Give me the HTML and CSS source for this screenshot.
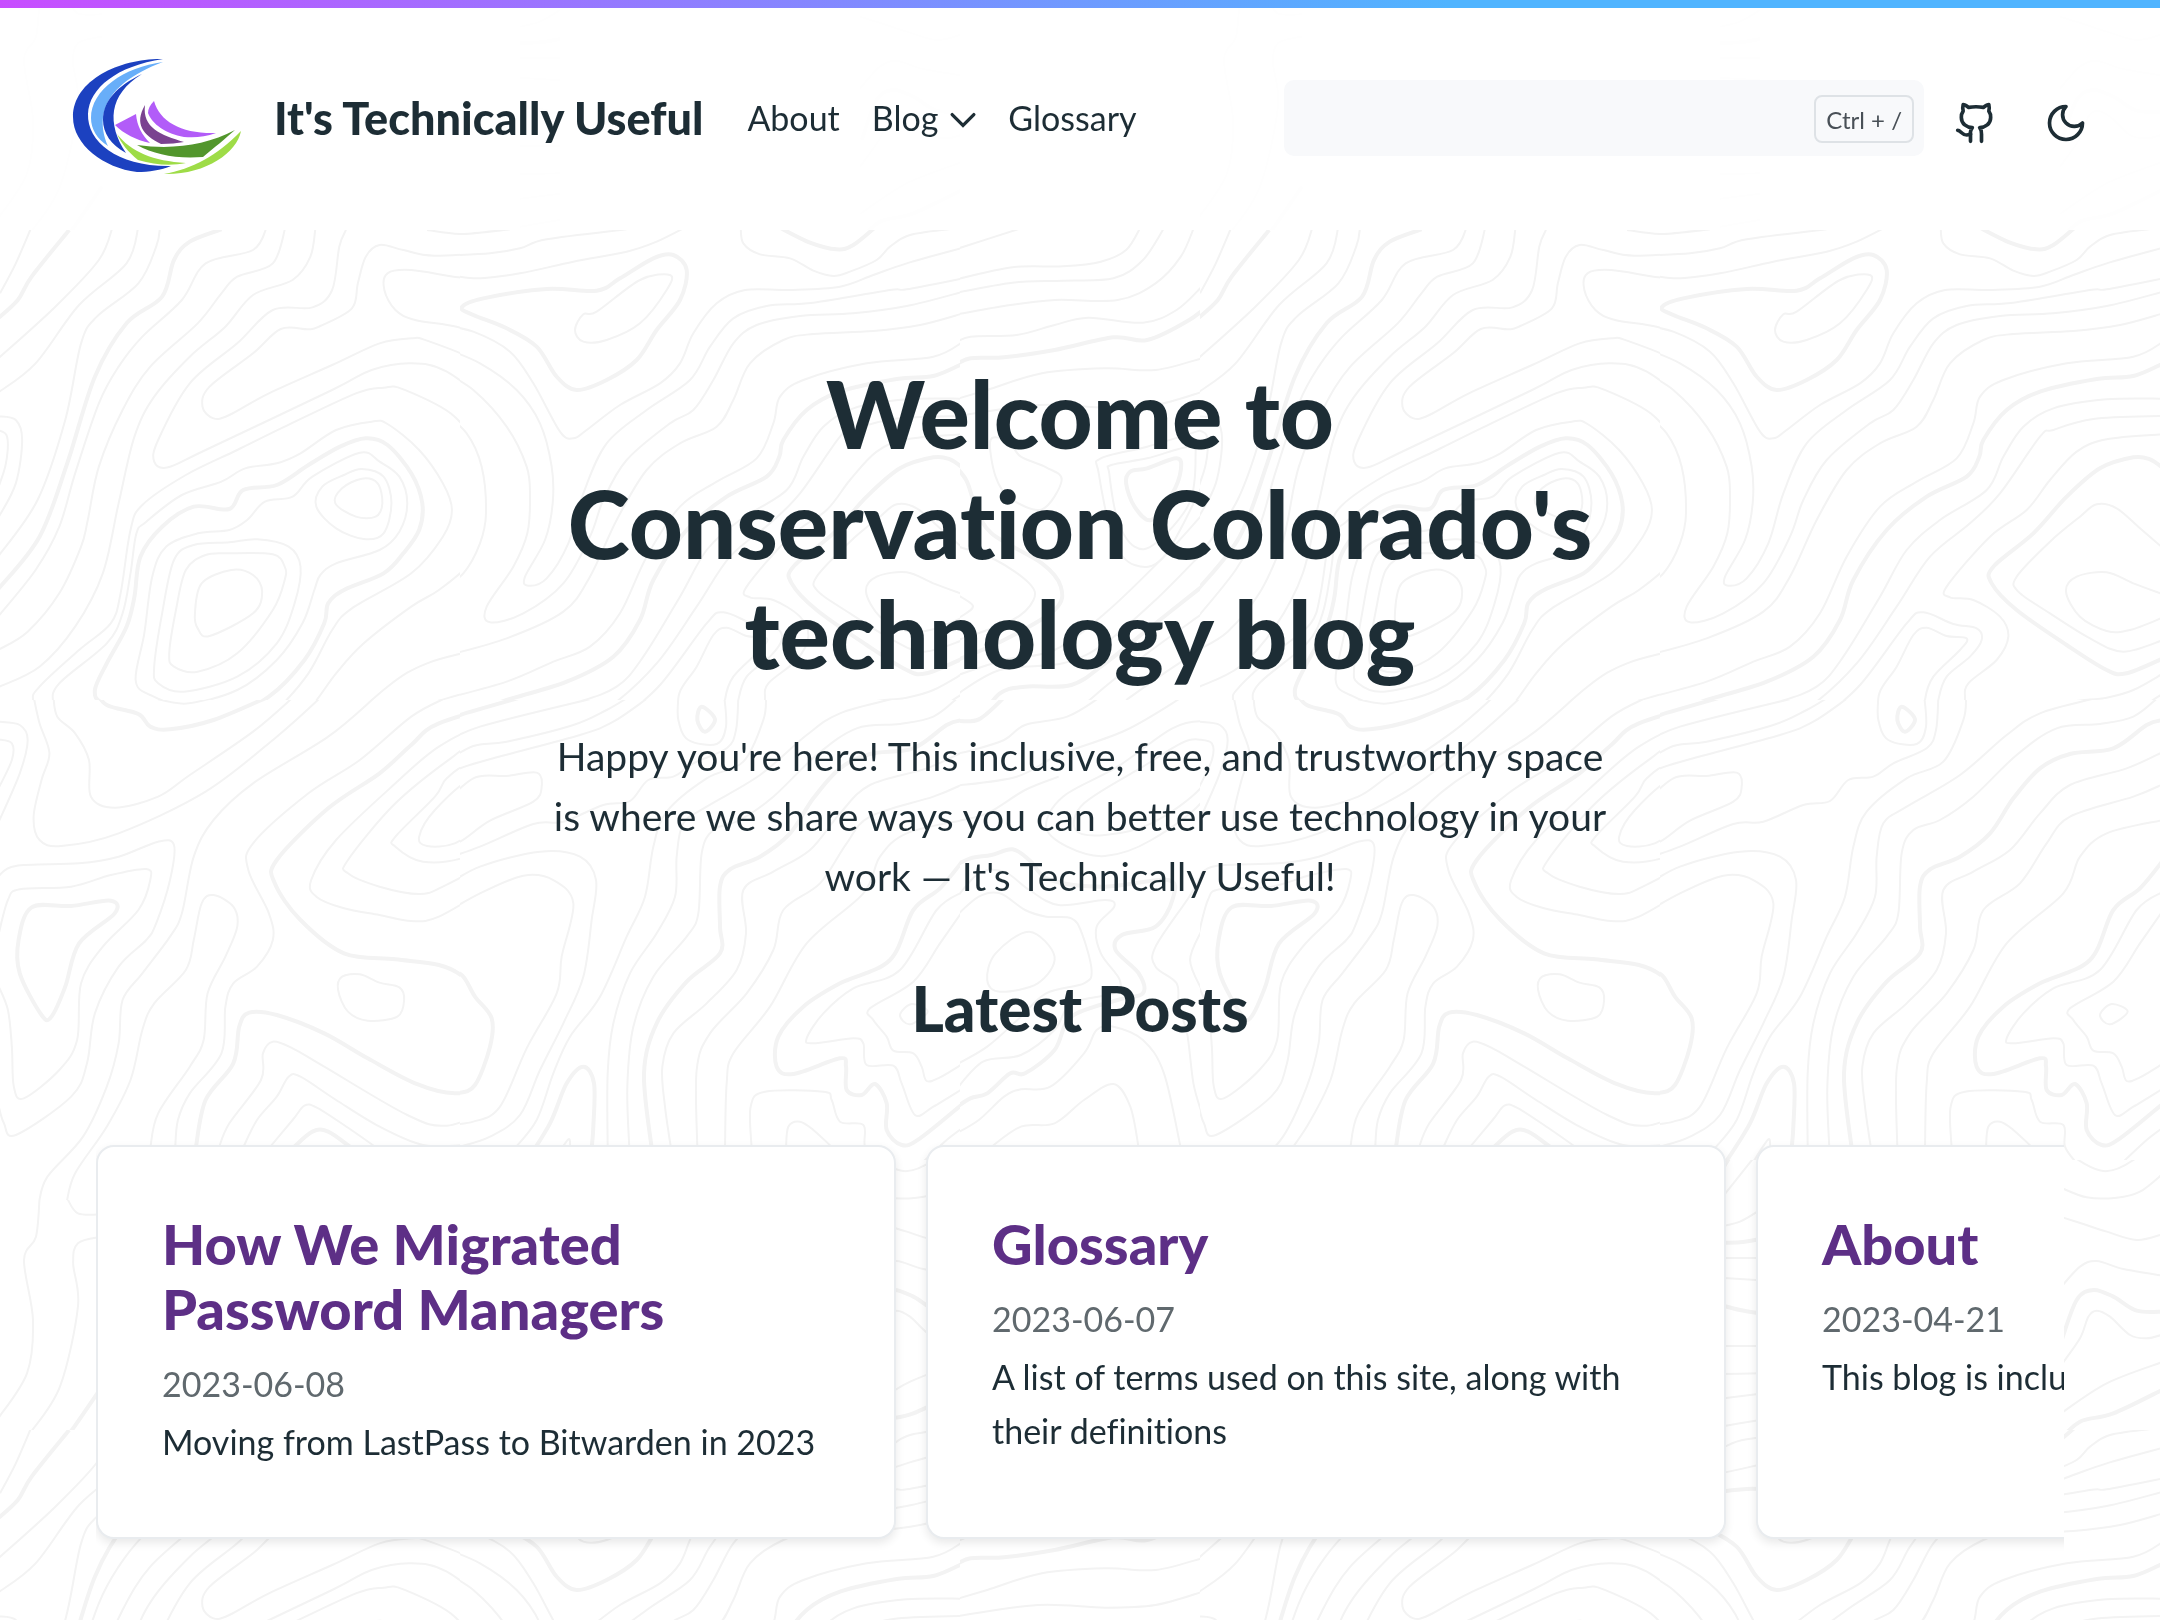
FILE: index.html
```html
<!DOCTYPE html>
<html lang="en">
<head>
<meta charset="utf-8">
<meta name="viewport" content="width=device-width, initial-scale=1">
<title>It's Technically Useful</title>
<link rel="stylesheet" href="styles.css">
</head>
<body>
<svg class="topography" aria-hidden="true">
  <defs>
    <pattern id="contours" width="1200" height="1200" patternUnits="userSpaceOnUse"></pattern>
  </defs>
  <rect width="100%" height="100%" fill="url(#contours)"/>
</svg>

<header class="site-header">
  <div class="header-inner">
    <a class="brand" href="#">
      <svg class="brand-logo" viewBox="0 0 172 120" aria-hidden="true">
        <path fill="#1c41c0" d="M91 1C50 0 1 21 1 59c0 28 31 51 64 55 12 0 24-2 34-6C46 109 15 84 16 56 17 30 45 8 91 1z"/>
        <path fill="#68aef9" d="M91 4C52 9 19 32 19 60c0 11 6 21 17 28C25 62 27 28 91 4z"/>
        <path fill="#1c41c0" d="M70 16C45 28 31 43 31 62c0 13 8 25 23 33C35 66 36 37 70 16z"/>
        <path fill="#b25cf8" d="M64 56 43 67c9 9 21 15 35 18-8-8-13-17-14-29z"/>
        <path fill="#7a4290" d="M73 47c-11 19-2 30 16 39 9 0 16-1 23-2C89 77 70 70 73 47z"/>
        <path fill="#b25cf8" d="M82 43c-4 4-6 8-6 12 4 11 18 21 36 24 11 1 21 0 32-4-34 1-56-11-62-32z"/>
        <path fill="#9edc47" d="M45 76c4 9 11 18 21 26 17 5 33 6 48 3-33-2-55-11-69-29z"/>
        <path fill="#52962c" d="M65 87c37 5 69 0 98-15-9 8-21 18-32 27-26 2-48-2-66-12z"/>
        <path fill="#9edc47" d="M169 73c-4 22-36 44-77 43 28-5 53-18 77-43z"/>
      </svg>
      <span class="brand-name">It's Technically Useful</span>
    </a>
    <nav class="main-nav" aria-label="Main">
      <a href="#">About</a>
      <a class="has-menu" href="#">Blog
        <svg class="chevron" viewBox="0 0 24 16" aria-hidden="true"><path d="M2 3l10 10L22 3"/></svg>
      </a>
      <a href="#">Glossary</a>
    </nav>
    <div class="header-tools">
      <form class="search" role="search">
        <input class="search-input" type="search" aria-label="Search">
        <kbd class="search-hint">Ctrl + /</kbd>
      </form>
      <div class="icon-links">
        <a class="icon-link" href="#" aria-label="GitHub">
          <svg class="icon" viewBox="0 0 24 24" aria-hidden="true"><path d="M15 22v-4a4.8 4.8 0 0 0-1-3.5c3 0 6-2 6-5.5.08-1.25-.27-2.48-1-3.5.28-1.15.28-2.35 0-3.5 0 0-1 0-3 1.5-2.64-.5-5.36-.5-8 0C6 2 5 2 5 2c-.3 1.15-.3 2.35 0 3.5A5.403 5.403 0 0 0 4 9c0 3.5 3 5.5 6 5.5-.39.49-.68 1.05-.85 1.65-.17.6-.22 1.23-.15 1.85v4"/><path d="M9 18c-4.51 2-5-2-7-2"/></svg>
        </a>
        <button class="icon-link" type="button" aria-label="Toggle dark mode">
          <svg class="icon" viewBox="0 0 24 24" aria-hidden="true"><path d="M12 3a6 6 0 0 0 9 9 9 9 0 1 1-9-9Z"/></svg>
        </button>
      </div>
    </div>
  </div>
</header>

<main>
  <section class="hero">
    <h1 class="hero-title">Welcome to Conservation Colorado's technology blog</h1>
    <p class="hero-lead">Happy you're here! This inclusive, free, and trustworthy space is where we share ways you can better use technology in your work — It's Technically Useful!</p>
    <h2 class="section-title">Latest Posts</h2>
  </section>
  <section class="posts" aria-label="Latest posts">
    <article class="card">
      <h3 class="card-title"><a href="#">How We Migrated Password Managers</a></h3>
      <p class="card-date">2023-06-08</p>
      <p class="card-text">Moving from LastPass to Bitwarden in 2023</p>
    </article>
    <article class="card">
      <h3 class="card-title"><a href="#">Glossary</a></h3>
      <p class="card-date">2023-06-07</p>
      <p class="card-text">A list of terms used on this site, along with their definitions</p>
    </article>
    <article class="card">
      <h3 class="card-title"><a href="#">About</a></h3>
      <p class="card-date">2023-04-21</p>
      <p class="card-text">This blog is inclusive</p>
    </article>
  </section>
</main>
<script src="contours.js"></script>
</body>
</html>
```
FILE: styles.css
```css
* {
  box-sizing: border-box;
}

body {
  margin: 0;
  min-height: 100vh;
  overflow-x: hidden;
  background: #fff;
  color: #1d2d35;
  font-family: Lato, "Open Sans", sans-serif;
  font-size: 34px;
  font-variant-ligatures: none;
  line-height: 54px;
}

h1, h2, h3, p {
  margin: 0;
}

h1, h2, h3 {
  font-weight: 900;
}

a {
  color: inherit;
  text-decoration: none;
}

.topography {
  position: fixed;
  inset: 0;
  width: 100%;
  height: 100%;
  z-index: -1;
}

.contour {
  fill: none;
  stroke: #f3f3f3;
  stroke-width: 2;
}

.contour-index {
  stroke-width: 4;
}

.site-header {
  height: 230px;
  border-top: 8px solid;
  border-image: linear-gradient(90deg, #c84dff, #50b4ff 67%) 1;
  background: rgba(255, 255, 255, 0.88);
}

.header-inner {
  display: flex;
  align-items: center;
  height: 220px;
  padding: 0 68px 0 72px;
}

.brand {
  display: flex;
  align-items: center;
  gap: 30px;
}

.brand-logo {
  width: 172px;
  height: 120px;
}

.brand-name {
  font-size: 45px;
  font-weight: 900;
}

.main-nav {
  display: flex;
  gap: 32px;
  margin-left: 44px;
}

.has-menu {
  display: flex;
  align-items: center;
  gap: 12px;
}

.chevron {
  width: 26px;
  height: 18px;
  margin-top: 4px;
  fill: none;
  stroke: currentColor;
  stroke-width: 3;
  stroke-linecap: round;
}

.header-tools {
  display: flex;
  align-items: center;
  gap: 26px;
  margin-left: auto;
}

.search {
  position: relative;
  width: 640px;
}

.search-input {
  display: block;
  width: 100%;
  height: 76px;
  padding: 0 120px 0 24px;
  border: 0;
  border-radius: 10px;
  background: #f8f9fb;
  font: inherit;
}

.search-hint {
  position: absolute;
  top: 15px;
  right: 10px;
  height: 48px;
  padding: 0 10px;
  border: 2px solid #dee2e6;
  border-radius: 8px;
  color: #495057;
  font-family: inherit;
  font-size: 24px;
  line-height: 46px;
}

.icon-links {
  display: flex;
  gap: 38px;
  margin-top: 10px;
}

.icon-link {
  display: flex;
  padding: 4px;
  border: 0;
  background: none;
  color: inherit;
}

.icon {
  width: 44px;
  height: 44px;
  fill: none;
  stroke: currentColor;
  stroke-width: 2;
  stroke-linecap: round;
  stroke-linejoin: round;
}

.hero {
  max-width: 1080px;
  margin: 0 auto;
  padding-top: 128px;
  text-align: center;
}

.hero-title {
  font-size: 94px;
  line-height: 110px;
}

.hero-lead {
  margin-top: 38px;
  padding: 0 12px;
  font-size: 39px;
  line-height: 60px;
}

.section-title {
  margin-top: 66px;
  font-size: 62px;
  line-height: 72px;
}

.posts {
  display: flex;
  gap: 30px;
  margin: 91px 96px 0;
  padding: 10px 0 40px;
  overflow: hidden;
}

.card {
  flex: 0 0 800px;
  padding: 64px 64px 68px;
  border: 2px solid #e9ecef;
  border-radius: 18px;
  background: #fff;
  box-shadow: 0 4px 10px rgba(0, 0, 0, 0.09);
}

.card-title {
  margin-bottom: 16px;
  color: #5d2f86;
  font-size: 56px;
  line-height: 65px;
}

.card-date {
  margin-bottom: 4px;
  color: #60696e;
}
```
FILE: contours.js
```js
// Contour lines of the map background. Each sheet covers one part of the
// 1200px tile: at = origin, k = units per pixel, clip = x, y, width, height.
// A line that starts with "!" is a heavy index line; "z" closes a ring.
const sheets = [
  { at: [0, 220], k: [2.529, 3], clip: [0, 230, 460, 470], lines: `
80,20 40,130 0,220
!175,30 80,170 45,240 -5,295
285,20 250,120 140,260 -5,416
350,20 320,130 200,255 90,430 -5,518
405,20 395,80 350,190 245,290 205,370 165,600 95,840 -5,1010
!560,28 480,65 440,120 410,230 320,310 240,470 170,730 100,950 -5,1108
675,20 640,90 520,130 460,240 360,350 300,440 250,550 190,760 150,920 90,1050 -5,1190
722,20 690,130 600,170 560,220 500,310 380,440 310,570 250,740 222,900 205,980 150,1120 70,1235 -5,1290
798,20 785,110 740,180 640,225 570,320 480,410 390,530 340,650 300,850 260,1060 190,1220 100,1340 -5,1402
875,30 858,80 840,210 790,262 690,270 600,370 480,490 400,660 390,725 425,742 520,690 840,510 940,450 1040,430 1130,455 1250,570 1320,700 1340,800
1568,32 1380,60 1290,90 1100,107 1020,90 960,75 925,110 905,190 890,265 810,318 780,328 710,327 640,400 530,500 512,560 540,595 580,585 680,520 840,435 960,370 1040,355 1080,362 1220,430 1320,520
1080,30 1170,42 1270,30
1568,105 1440,130 1230,173 1160,172 1040,150 980,160 972,210 1000,270 1050,300 1160,322 1260,370 1330,450
123,1570 85,1450 100,1400 200,1290 280,1210 305,1120 330,930 360,855 470,765 600,690 720,620 900,520 970,503 1020,508 1150,590 1215,720 1228,860 1222,970 1190,1030 1110,1110 1040,1160 920,1270 850,1360 780,1470 690,1560
205,1560 160,1510 135,1450 150,1390 270,1270 310,1180 330,1060 345,940 370,905 460,825 560,785 620,745 700,730 760,700 850,630 940,605 980,612 1060,690 1120,790 1143,870 1120,950 1040,1060 890,1165 840,1230 780,1360 700,1470 610,1560
!925,655 980,675 1040,760 1068,850 1060,930 1020,1000 970,1060 870,1110 830,1150 820,1210 770,1320 680,1430 560,1500 410,1528 375,1510 350,1480 260,1450 240,1410 270,1330 320,1220 340,1130 355,1010 410,920 490,860 580,867 615,810 700,795 780,735 860,680 z
910,698 960,725 1010,770 1030,850 1010,935 960,990 850,1030 810,1065 795,1110 765,1210 700,1320 600,1410 465,1452 380,1425 343,1380 365,1240 385,1070 420,980 500,940 580,930 625,900 670,845 740,830 790,770 z
915,747 970,770 990,850 970,940 920,957 850,925 800,860 815,800 870,765 z
915,776 955,790 967,850 950,890 900,890 848,850 865,805 z
650,958 730,980 760,1040 745,1150 700,1270 600,1370 465,1415 400,1390 390,1340 410,1180 440,1020 490,975 580,967 z
580,1000 690,1003 720,1040 720,1080 690,1170 600,1300 500,1355 440,1340 428,1300 445,1170 470,1050 520,1005 z
585,1050 640,1065 663,1115 640,1180 530,1248 500,1225 493,1180 510,1090 z
-5,589 40,600 56,660 40,790 -5,895
-5,630 18,650 15,730 -5,805
830,1560 980,1400 1080,1330 1230,1280 1380,1210
970,1560 1080,1460 1130,1435 1300,1380
!1050,1560 1110,1500 1300,1430` },
  { at: [0, 700], k: [2.529, 3], clip: [0, 700, 460, 500], lines: `
85,-10 100,70 125,160 105,240 85,350 100,420 155,438 300,400 520,275 700,110 813,-10
135,-10 145,50 190,100 225,180 230,290 290,323 400,290 480,225 640,95 743,-10
!240,-30 270,15 350,42 380,80 430,88 540,60 680,-10
380,-8 465,11 545,-8
-5,65 50,75 70,120 50,220 -5,370
-5,118 30,130 30,180 -5,268
950,-10 830,110 640,250 540,360 490,470 460,640 430,710 360,820 310,900 300,1030 270,1160 210,1310 120,1430 98,1510
1125,-5 1040,50 910,180 780,280 640,430 628,510 680,640 690,720 650,800 590,850 570,920 560,1060 480,1180 450,1260 443,1345
!1310,0 1110,70 1040,135 960,220 830,325 700,480 695,550 760,660 870,760 1000,778 1110,795 1170,830 1200,890 1240,950 1240,1030 1200,1155 1150,1180 1050,1150 930,1075 820,1000 700,945 630,938 605,980 590,1090 520,1200 495,1345
1483,0 1230,75 1110,140 1000,250 850,420 787,540 800,590 870,625 960,645 1040,663 1110,650 1240,560
1568,1180 1260,1230 1130,1277 1030,1245 820,1100 740,1045 690,1025 665,1060 660,1140 580,1270 553,1345
1568,20 1400,90 1200,138 1140,175 1000,310 880,480 880,520 960,560 1060,582 1120,560 1240,485
614,1345 650,1260 700,1190 730,1130 760,1130 850,1200 960,1280 1070,1335 1180,1335
1568,65 1400,130 1200,185 1130,235 1100,290 1000,410 1000,440 1070,485 1180,470 1340,378
1200,230 1290,225 1360,218 1370,260 1330,320 1230,370 1150,430 1080,438 1060,410 1100,330 z
-5,530 40,498 200,490 300,470 400,425 440,435 430,540 395,670 370,720 300,800 240,940 220,1090 180,1190 40,1305 10,1270 -5,1210
-5,710 20,600 50,568 180,560 280,525 370,507 380,540 350,630 260,740 205,850 195,1020 150,1110 60,1195 35,1160 30,1040 20,930 -5,855
!80,622 180,618 280,602 290,640 200,730 165,860 130,950 105,945 50,820 47,720 z
380,1345 400,1240 480,1100 515,1020 525,880 570,770 600,680 590,620 540,585 510,610 490,720 470,810 390,910 360,990 330,1140 270,1280 190,1420 168,1510
855,870 865,830 910,823 960,848 1010,862 1022,900 1005,950 930,962 880,935 z
680,1345 740,1260 770,1217 800,1222 870,1275 955,1345
!740,1345 790,1295 830,1295 890,1345` },
  { at: [440, 220], k: [3, 3], clip: [460, 230, 500, 470], lines: `
0,38 70,42 210,28
0,108 150,100 240,85 320,58 560,28
0,160 110,175 240,160 400,125 560,95 650,65 740,20
!65,262 130,235 320,207 470,212 540,175 640,115 700,105 740,150 720,240 650,330 590,420 500,480 410,510 350,470 290,380 200,325 100,285 z
430,283 470,275 600,180 690,165 680,210 600,310 500,360 430,365 405,330 z
0,315 100,335 210,395 280,490 360,635 400,655 440,630 540,555 660,490 720,430 760,340 830,250 915,210 1050,210 1200,200 1300,165 1400,130 1570,83
902,20 910,70 960,103 1050,115 1120,152 1180,168 1230,155 1310,120 1350,80 1410,45 1530,27
!1010,18 1110,68 1190,88 1240,75 1310,18
0,380 120,430 230,510 300,610 335,740 338,850 315,960 255,1070 265,1097 320,1075 385,970 430,820 500,670 620,570 750,480 810,380 880,295 980,258 1120,248 1350,210 1400,208 1570,175
0,450 100,510 200,620 260,740 270,830 262,940 220,1040 140,1160 150,1207 250,1180 370,1090 450,950 490,840 560,720 690,610 760,570 820,480 880,370 950,315 1080,288 1240,280 1400,258 1570,215
0,570 80,640 125,740 138,880 120,970 70,1060 0,1112
0,1312 200,1255 370,1175 450,1070 530,900 620,750 720,670 830,620 880,540 930,430 1030,360 1120,342 1300,333 1440,315 1570,280
0,1440 200,1385 340,1325 450,1280 540,1180 620,1010 720,860 830,785 950,715 1000,610 1020,530 1090,480 1280,430 1480,410 1570,365
!20,1500 200,1440 380,1385 520,1310 600,1200 640,1080 740,930 860,830 980,770 1018,710 1030,660 1100,570 1200,515 1370,477 1480,468 1570,430
200,1500 400,1450 530,1400 610,1310 720,1130 800,990 900,900 1040,810 1090,710 1150,620 1240,565 1400,538 1570,536
420,1500 510,1460 650,1330 770,1160 870,1010 990,910 1080,820 1200,650 1240,630 1360,597 1570,588
540,1500 660,1395 800,1210 850,1177 940,1212 1010,1225 1025,1260 990,1310 920,1370 895,1440 890,1510
1570,643 1400,658 1310,695 1230,780 1160,870 1050,950 920,1100 930,1132 1000,1140 1080,1190 1105,1250 1070,1320 985,1390 975,1440 978,1510
!1570,745 1530,718 1480,712 1380,745 1280,830 1180,940 1060,1040 1055,1090 1130,1170 1280,1275 1400,1350 1460,1360 1570,1315
1570,985 1500,925 1430,865 1370,853 1320,890 1230,965 1130,1070 1135,1115 1230,1180 1350,1255 1450,1295 1570,1260
1570,1123 1480,1090 1400,1057 1310,1070 1278,1115 1320,1190 1400,1233 1470,1230 1570,1192
715,1510 718,1420 770,1340 820,1245 860,1223 920,1248 980,1255 960,1290 880,1370 855,1440 860,1510
1165,1500 1270,1450 1400,1433 1480,1410 1570,1360
1420,1500 1490,1470 1570,1420` },
  { at: [440, 700], k: [3, 3], clip: [460, 700, 500, 460], lines: `
!-20,75 60,45 250,-10
0,138 120,80 480,-10
0,195 100,138 200,125 400,75 500,30 560,-5
0,262 50,210 160,175 420,105 520,65 622,-5
715,-10 715,60 745,120 830,132 858,80 853,-10
!785,20 825,58 795,95 772,60 z
895,-10 888,90 860,145 760,190 700,230 625,240 570,303 490,315 370,365 280,372 120,440 0,482
0,325 100,235 200,228 290,218 305,260 280,305 150,362 60,425 0,437
978,-10 970,60 910,185 800,235 680,335 640,440 615,590 560,710 480,890 390,1010 340,1120 290,1260 220,1350
0,568 120,500 300,455 420,470 468,540 455,660 430,830 370,970 300,1110 240,1245 150,1310 60,1340
0,648 120,580 250,527 340,540 400,610 365,770 350,880 260,1045 180,1220 100,1265 0,1277
!0,798 65,825 105,890 155,955 150,1040 105,1155 50,1180 0,1175
!255,1390 330,1270 380,1150 430,1100 462,1150 460,1280 455,1345
340,1385 385,1318 390,1350
1365,-5 1200,40 1100,105 960,225 800,320 730,370 710,470 705,590 650,700 570,820 520,970 503,1120 503,1345
1555,-8 1480,50 1380,72 1250,85 1130,165 1000,290 900,360 820,390 785,460 775,640 740,710 640,830 580,980 562,1160 568,1345
!1570,60 1520,75 1420,145 1290,162 1200,205 1120,295 1050,400 960,470 870,508 840,560 840,680 840,760 740,845 650,970 612,1120 635,1345
1570,155 1460,205 1290,255 1200,340 1110,450 1000,515 910,570 918,700 890,810 800,910 700,1000 667,1100 675,1220 693,1345
1570,252 1480,290 1290,350 1220,430 1140,550 1030,630 1000,750 920,880 810,1000 770,1110 772,1345
1570,360 1400,400 1320,470 1270,580 1100,730 990,920 880,1060 860,1150 855,1345
!1570,480 1500,565 1420,630 1350,780 1200,850 1090,920 1015,1010 1010,1100 1060,1122 1200,1075 1218,1100 1220,1170 1265,1185 1305,1152 1340,1210 1340,1290 1385,1335 1440,1315 1570,1210
1570,575 1490,630 1380,810 1240,865 1150,940 1100,1015 1120,1030 1240,1015 1270,1030 1280,1095 1360,1097 1385,1150 1425,1245 1480,1220 1570,1165
1570,630 1500,730 1420,845 1290,925 1300,960 1340,1010 1360,1052 1420,1060 1445,1100 1460,1143 1500,1132 1570,1090
1415,912 1463,935 1410,973 1380,945 z
935,1345 932,1220 975,1175 1150,1175 1175,1200 1200,1265 1270,1275 1275,1340 1310,1390
1038,1345 1045,1280 1080,1265 1120,1290 1185,1350
1570,1282 1520,1320 1450,1385` },
  { at: [600, 220], k: [2.376, 3], clip: [960, 230, 240, 470], lines: `
840,90 1000,25
840,180 980,142 1100,139 1190,125 1250,90 1285,20
840,220 980,188 1100,182 1220,175 1290,120 1342,20
840,285 960,258 1080,240 1230,240 1320,190 1380,110 1412,20
840,372 880,350 990,345 1080,315 1160,293 1290,308 1370,270 1430,200
!840,438 880,415 960,412 1080,390 1220,352 1300,360 1400,300 1460,240
840,540 920,510 1050,460 1200,445 1320,450 1430,415
840,590 1040,555 1200,563 1320,555 1430,516
928,660 940,770 975,835 1050,868 1097,780 1060,742 1000,710 970,665 z
!1250,790 1260,755 1300,745 1370,715 1380,750 1360,820 1310,900 1270,860 z
1210,760 1215,735 1300,715 1400,680 1415,710 1400,850 1320,970 1270,980 1230,900 z
1430,630 1300,680 1190,715 1185,760 1220,960 1270,1035 1340,1010 1430,800
!835,725 870,780 890,850 930,940 1050,1030 1095,1100 1080,1170 960,1260 840,1325
840,975 940,1020 1020,1090 1030,1140 980,1200 840,1265
840,1118 885,1155 870,1180 835,1205
840,1370 960,1320 1080,1290 1200,1180 1340,1010 1430,885
840,1430 950,1350 1100,1330 1200,1270 1320,1140 1430,1000
!850,1560 900,1500 950,1420 1010,1400 1120,1395 1200,1330 1300,1230 1430,1100
1110,1500 1200,1400 1300,1300 1430,1182
1250,1440 1340,1360 1430,1285` },
  { at: [600, 700], k: [2.376, 3], clip: [960, 700, 240, 460], lines: `
!845,62 900,58 962,-10
840,162 880,152 960,120 1010,75 1110,50 1190,-10
840,258 990,230 1090,165 1250,90 1385,-10
840,365 920,340 1010,270 1090,230
1440,65 1490,105 1440,290 1310,420 1200,468 1110,440 1060,380 1100,290 1230,200 1360,85 z
1400,120 1450,150 1430,260 1310,370 1200,405 1130,390 1150,310 1290,200 z
!840,500 880,475 930,465 980,448 1020,480 1070,540 1200,560 1350,540 1360,600 1320,680 1240,705 1225,750 1280,820 1290,880 1230,900 1120,950 1080,1050 1010,1120 975,1120 920,1180 880,1195 840,1228
840,605 900,520 960,515 1020,570 1090,615 1200,600 1222,620 1180,680 1190,760 1235,840 1220,880 1120,910 1080,990 1000,1065 910,1085 840,1178
840,655 900,590 950,580 1010,630 1060,650 1120,655 1145,700 1168,810 1150,850 1060,880 1000,950 920,1040 840,1098
1020,695 1080,770 1040,850 950,875 920,840 940,760 z
1430,522 1400,590 1320,740 1320,800 1370,850 1375,920 1395,1000 1410,1150 1430,1240
1430,690 1402,780 1430,870
840,1305 900,1260 960,1190 1000,1168 1070,1160 1150,1060 1180,990 1220,980 1290,1020 1340,1120 1380,1345
925,1345 1000,1280 1080,1270 1150,1200 1220,1152 1260,1220 1280,1345` },
  { at: [440, -100], k: [3, 3], clip: [460, -40, 500, 270], wrap: true, lines: `
!235,230 258,190 330,70
240,300 258,278 320,200 385,118
240,380 300,365 360,330
!240,428 300,427 360,417
240,474 360,474
240,533 360,541
!240,615 300,630 360,640
240,738 360,738
240,822 360,820
240,896 360,881
240,980 360,960
1275,100 1290,160 1390,213 1480,180 1530,115 1570,80
1260,262 1340,292 1430,293 1500,275 1570,220
1260,350 1330,372 1400,395 1490,420 1570,402
1260,565 1320,500 1370,483 1450,507 1570,527
!1265,720 1310,600 1360,570 1420,590 1490,632 1570,635
1260,800 1320,715 1345,650 1370,632 1410,650 1470,705 1520,715 1570,703
1260,942 1400,850 1570,785
!1260,1020 1320,965 1420,940 1570,868` },
  { at: [0, -80], k: [1.668, 3], clip: [0, 0, 160, 230], lines: `
66,235 60,350 40,420 55,600 45,760 -5,900
112,235 130,280 170,283
170,350 130,370 122,430 130,560 100,800 50,940
!170,800 120,930 105,960` },
];

const SVG = "http://www.w3.org/2000/svg";
const tile = document.getElementById("contours");

// Smooth curve through the points (Catmull-Rom, written as cubic segments).
function curve(points, closed) {
  const n = points.length;
  const at = i => closed ? points[(i + n) % n] : points[Math.max(0, Math.min(n - 1, i))];
  let d = `M${at(0)}`;
  for (let i = 0; i < (closed ? n : n - 1); i++) {
    const [p, q, r, s] = [at(i - 1), at(i), at(i + 1), at(i + 2)];
    d += `C${q[0] + (r[0] - p[0]) / 6},${q[1] + (r[1] - p[1]) / 6}`
      + ` ${r[0] - (s[0] - q[0]) / 6},${r[1] - (s[1] - q[1]) / 6} ${r}`;
  }
  return d + (closed ? "Z" : "");
}

for (const { at, k, clip, lines, wrap } of sheets) {
  const frame = document.createElementNS(SVG, "svg");
  const [x, y, width, height] = clip;
  for (const [name, value] of Object.entries({ x, y, width, height, viewBox: clip.join(" ") })) {
    frame.setAttribute(name, value);
  }
  for (const line of lines.trim().split("\n")) {
    const heavy = line.startsWith("!");
    const closed = line.endsWith("z");
    const points = line.replace(/[!z]/g, "").trim().split(" ").map(pair => {
      const [px, py] = pair.split(",").map(Number);
      return [at[0] + px / k[0], at[1] + py / k[1]];
    });
    const path = document.createElementNS(SVG, "path");
    path.setAttribute("class", heavy ? "contour contour-index" : "contour");
    path.setAttribute("d", curve(points, closed));
    frame.append(path);
  }
  tile.append(frame);
  if (wrap) {
    const copy = frame.cloneNode(true);
    copy.setAttribute("y", y + 1200);
    tile.append(copy);
  }
}
```
